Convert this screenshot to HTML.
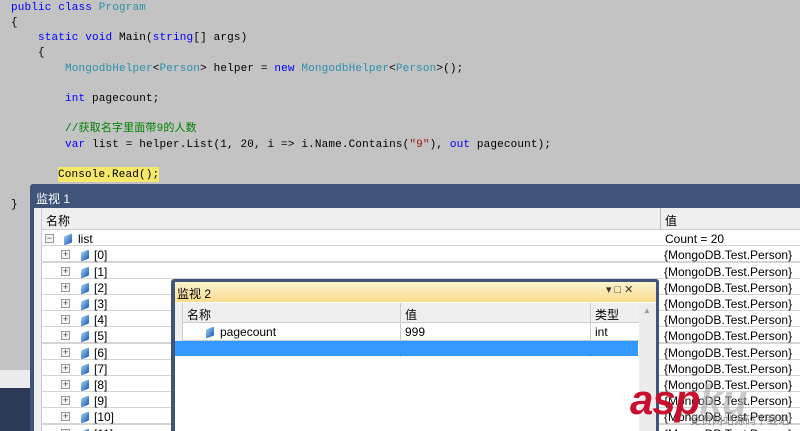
<!DOCTYPE html><html><head><meta charset="utf-8"><style>
*{margin:0;padding:0;box-sizing:border-box}
html{width:800px;height:431px;overflow:hidden}
body{width:800px;height:431px;overflow:hidden;background:#c3c3c3;position:relative;font-family:"Liberation Sans","Noto Sans CJK SC",sans-serif;font-size:11px;color:#000}
.code{position:absolute;left:11px;font-family:"Liberation Mono","Noto Sans CJK SC",monospace;font-size:11px;white-space:pre;letter-spacing:0.15px;line-height:14px}
.k{color:#0000ff}.t{color:#2b91af}.c{color:#008000}
.a{position:absolute}
.row{position:absolute;height:17px;border-bottom:2px solid #d4d4d4;background:#fff;line-height:16px}
.pl{position:absolute;width:9px;height:9px;border:1px solid #999;background:#f4f4f4;font-size:9px;line-height:7px;text-align:center;color:#444}
.ic{position:absolute;width:8px;height:9px;background:linear-gradient(135deg,#9cc8f0,#1c5fb8);transform:skewY(-20deg);border-radius:1px}
</style></head><body>
<div class="code" style="top:1px"><span class="k">public class</span> <span class="t">Program</span></div>
<div class="code" style="top:16px">{</div>
<div class="code" style="top:31px">    <span class="k">static void</span> Main(<span class="k">string</span>[] args)</div>
<div class="code" style="top:46px">    {</div>
<div class="code" style="top:62px">        <span class="t">MongodbHelper</span>&lt;<span class="t">Person</span>&gt; helper = <span class="k">new</span> <span class="t">MongodbHelper</span>&lt;<span class="t">Person</span>&gt;();</div>
<div class="code" style="top:92px">        <span class="k">int</span> pagecount;</div>
<div class="code" style="top:122px">        <span class="c">//获取名字里面带9的人数</span></div>
<div class="code" style="top:138px">        <span class="k">var</span> list = helper.List(1, 20, i =&gt; i.Name.Contains(<span style="color:#a31515">"9"</span>), <span class="k">out</span> pagecount);</div>
<div class="a" style="left:58px;top:167px;width:101px;height:15px;background:#f5e86a"></div>
<div class="code" style="top:168px;left:58px">Console.Read();</div>
<div class="code" style="top:198px">}</div>
<div class="a" style="left:0;top:370px;width:30px;height:18px;background:#ececec"></div>
<div class="a" style="left:0;top:388px;width:30px;height:43px;background:#2b3a55"></div>
<div class="a" style="left:30px;top:184px;width:770px;height:247px;background:#3f5478;border-radius:3px 0 0 0"></div>
<div class="a" style="left:36px;top:190px;color:#fff;font-size:12px">监视 1</div>
<div class="a" style="left:34px;top:208px;width:766px;height:223px;background:#fff"></div>
<div class="a" style="left:34px;top:208px;width:766px;height:22px;background:#efefef;border-bottom:1px solid #ccc"></div>
<div class="a" style="left:34px;top:208px;width:8px;height:223px;background:#efefef;border-right:1px solid #ccc"></div>
<div class="a" style="left:46px;top:212px;font-size:12px">名称</div>
<div class="a" style="left:660px;top:208px;width:1px;height:223px;background:#bbb"></div>
<div class="a" style="left:665px;top:212px;font-size:12px">值</div>
<div class="row" style="left:42px;top:230px;width:758px"></div>
<div class="pl" style="left:45px;top:234px">−</div><div class="ic" style="left:64px;top:235px"></div>
<div class="a" style="left:78px;top:232px;font-size:12px">list</div>
<div class="a" style="left:665px;top:232px;font-size:12px">Count = 20</div>
<div id="rows"></div>
<script>
var h='';for(var i=0;i<12;i++){var y=246.3+i*16.2;h+='<div class="row" style="left:42px;top:'+y+'px;width:758px"></div><div class="pl" style="left:61px;top:'+(y+4)+'px">+</div><div class="ic" style="left:81px;top:'+(y+5)+'px"></div><div class="a" style="left:94px;top:'+(y+2)+'px;font-size:12px">['+i+']</div><div class="a" style="left:664px;top:'+(y+2)+'px;font-size:12px">{MongoDB.Test.Person}</div>';}
document.getElementById('rows').innerHTML=h;
</script>
<div class="a" style="left:171px;top:279px;width:488px;height:152px;background:#3f5478;border-radius:3px 3px 0 0"></div>
<div class="a" style="left:175px;top:282px;width:481px;height:20px;background:linear-gradient(#fdf3d0,#f9dc8c)"></div>
<div class="a" style="left:177px;top:285px;font-size:12px">监视 2</div>
<div class="a" style="left:606px;top:283px;font-size:11px;color:#333;letter-spacing:3px">▾□✕</div>
<div class="a" style="left:175px;top:302px;width:481px;height:129px;background:#fff"></div>
<div class="a" style="left:175px;top:303px;width:464px;height:20px;background:#efefef;border-bottom:1px solid #ccc"></div>
<div class="a" style="left:175px;top:303px;width:8px;height:38px;background:#efefef;border-right:1px solid #ccc"></div>
<div class="a" style="left:187px;top:306px;font-size:12px">名称</div>
<div class="a" style="left:400px;top:303px;width:1px;height:54px;background:#ccc"></div>
<div class="a" style="left:405px;top:306px;font-size:12px">值</div>
<div class="a" style="left:590px;top:303px;width:1px;height:54px;background:#ccc"></div>
<div class="a" style="left:595px;top:306px;font-size:12px">类型</div>
<div class="a" style="left:183px;top:324px;width:456px;height:17px;border-bottom:1px solid #ccc"></div>
<div class="ic" style="left:206px;top:328px"></div>
<div class="a" style="left:220px;top:325px;font-size:12px">pagecount</div>
<div class="a" style="left:405px;top:325px;font-size:12px">999</div>
<div class="a" style="left:595px;top:325px;font-size:12px">int</div>
<div class="a" style="left:175px;top:341px;width:463px;height:15px;background:#3399ff"></div>
<div class="a" style="left:639px;top:303px;width:17px;height:128px;background:#ececec"></div>
<div class="a" style="left:643px;top:306px;font-size:8px;color:#999">▲</div>
<div class="a" style="left:630px;top:376px;font-size:42px;font-weight:bold;font-style:italic;color:#c8102e;letter-spacing:-1px">asp<span style="color:#aaa;opacity:.6">ku</span></div>
<div class="a" style="left:690px;top:412px;font-size:11px;color:#888">免费网站源码下载站!</div>
</body></html>
